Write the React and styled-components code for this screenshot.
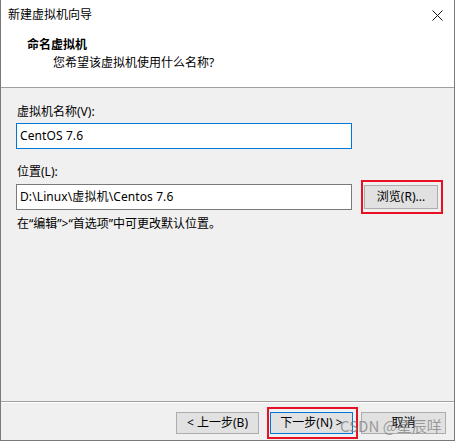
import React from 'react';
import styled, { createGlobalStyle } from 'styled-components';

const GlobalStyle = createGlobalStyle`
body {
  margin: 0;
  background: #ffffff;
  font-family: "Noto Sans", "Noto Sans CJK SC", sans-serif;
  font-size: 12px;
  color: #000;
}
`

const Window = styled.div`
position: relative;
width: 455px;
height: 441px;
box-sizing: border-box;
display: flex;
flex-direction: column;
background: #f0f0f0;
border-left: 1px solid #7a7a7a;
border-right: 1px solid #7a7a7a;
border-bottom: 1px solid #7a7a7a;
overflow: hidden;
`

const Top = styled.div`
background: #ffffff;
border-bottom: 1px solid #a0a0a0;
`

const TitleBar = styled.div`
height: 30px;
display: flex;
align-items: center;
justify-content: space-between;
padding: 0 11px 0 7px;
`

const TitleText = styled.span`
font-size: 12px;
line-height: 16px;
`

const Header = styled.div`
height: 57px;
box-sizing: border-box;
padding: 7px 0 0 26px;
`

const HeaderTitle = styled.div`
font-weight: bold;
line-height: 16px;
`

const HeaderSub = styled.div`
margin-top: 2px;
padding-left: 26px;
line-height: 16px;
`

const Body = styled.div`
flex: 1;
padding: 16px 0 0 15px;
`

const Label = styled.div`
line-height: 16px;
margin-top: ${p => p.$top || 0}px;
padding-left: 1px;
`

const Row = styled.div`
display: flex;
align-items: center;
margin-top: ${p => p.$top || 3}px;
`

const Field = styled.div`
width: 336px;
height: 26px;
box-sizing: border-box;
background: #fff;
border: 1px solid ${p => (p.$focused ? '#0078d7' : '#7a7a7a')};
padding-left: 3px;
display: flex;
align-items: center;
line-height: 16px;
letter-spacing: 0.1px;
`

const Highlight = styled.div`
position: relative;
margin-left: ${p => p.$left || 0}px;
&::after {
  content: "";
  position: absolute;
  left: -3px;
  right: -5px;
  top: -5px;
  bottom: -5px;
  border: 2px solid #e81123;
  pointer-events: none;
}
`

const Button = styled.div`
width: ${p => p.$w || 83}px;
height: ${p => p.$h || 22}px;
box-sizing: border-box;
display: flex;
align-items: center;
justify-content: center;
background: #e1e1e1;
border: 1px solid ${p => (p.$primary ? '#0078d7' : '#adadad')};
margin-left: ${p => p.$left || 0}px;
line-height: 16px;
white-space: nowrap;
`

const Hint = styled.div`
margin-top: 6px;
line-height: 16px;
padding-left: 1px;
`

const Footer = styled.div`
height: 39px;
box-sizing: border-box;
border-top: 1px solid #a0a0a0;
box-shadow: inset 0 1px 0 #ffffff;
padding: 10px 8px 0 0;
display: flex;
justify-content: flex-end;
align-items: flex-start;
`

const Watermark = styled.div`
position: absolute;
left: 339px;
top: 416px;
font-family: "Noto Sans CJK SC", sans-serif;
font-size: 15px;
line-height: 19px;
color: rgba(120, 120, 120, 0.7);
white-space: nowrap;
pointer-events: none;
`

function CloseIcon() {
  return (
    <svg width="11" height="11" viewBox="0 0 11 11">
      <path d="M0.5 0.5 L10.5 10.5 M10.5 0.5 L0.5 10.5" stroke="#111" strokeWidth="1" fill="none" />
    </svg>
  )
}

function App() {
  return (
    <>
      <GlobalStyle />
      <Window>
        <Top>
          <TitleBar>
            <TitleText>新建虚拟机向导</TitleText>
            <CloseIcon />
          </TitleBar>
          <Header>
            <HeaderTitle>命名虚拟机</HeaderTitle>
            <HeaderSub>您希望该虚拟机使用什么名称?</HeaderSub>
          </Header>
        </Top>
        <Body>
          <Label>虚拟机名称(V):</Label>
          <Row>
            <Field $focused>CentOS 7.6</Field>
          </Row>
          <Label $top={15}>位置(L):</Label>
          <Row $top={4}>
            <Field>D:\Linux\虚拟机\Centos 7.6</Field>
            <Highlight $left={12}>
              <Button $w={74} $h={24}>浏览(R)...</Button>
            </Highlight>
          </Row>
          <Hint>在“编辑”&gt;“首选项”中可更改默认位置。</Hint>
        </Body>
        <Footer>
          <Button>&lt; 上一步(B)</Button>
          <Highlight $left={11}>
            <Button $primary>下一步(N) &gt;</Button>
          </Highlight>
          <Button $left={8} $w={85}>取消</Button>
        </Footer>
        <Watermark>CSDN @星辰咩</Watermark>
      </Window>
    </>
  )
}

export default App;
